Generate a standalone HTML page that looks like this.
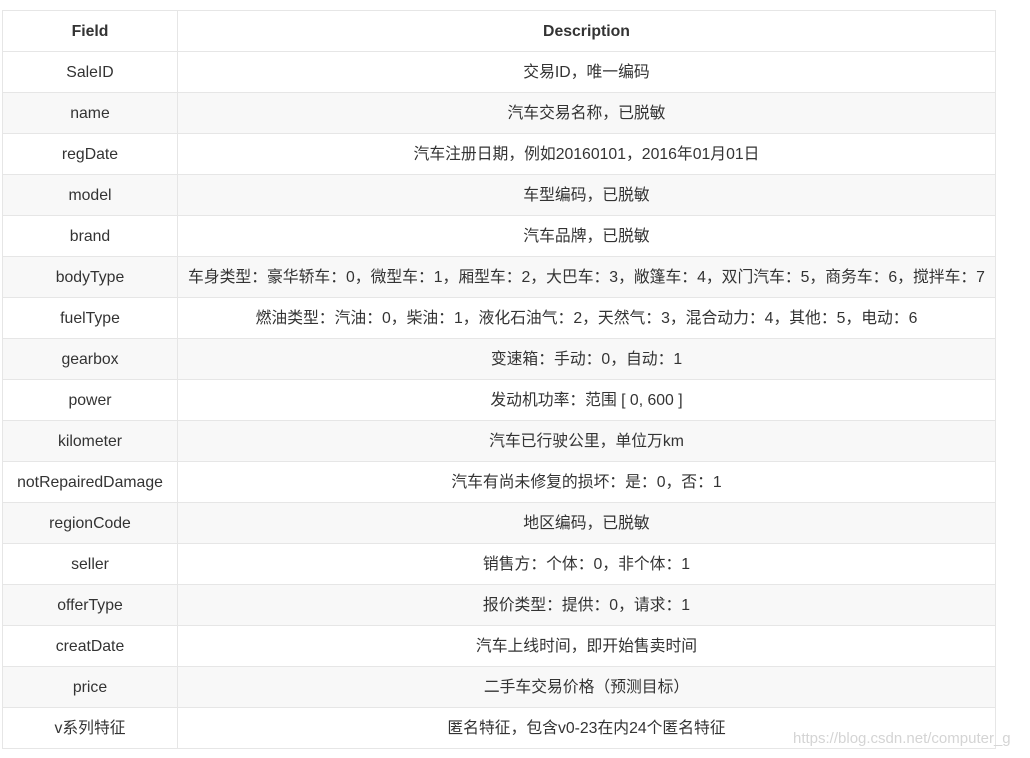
<!DOCTYPE html>
<html><head><meta charset="utf-8"><style>
html,body{margin:0;padding:0;background:#fff;width:1030px;height:758px;overflow:hidden}
body{font-family:"Liberation Sans","Noto Sans CJK SC",sans-serif;font-size:15.8px;color:#333}
table{position:absolute;left:2px;top:10px;border-collapse:collapse;table-layout:fixed}
td,th{border:1px solid #e6e6e6;height:38px;padding:2px 0 0 0;text-align:center;vertical-align:middle;white-space:nowrap;line-height:20px}
th{font-weight:bold;background:#fff}
tr:nth-child(odd) td{background:#f8f8f8}
.wm{position:absolute;left:793px;top:730px;font-size:15px;color:#d4d4d4;font-family:"Liberation Sans",sans-serif}
</style></head><body>
<table>
<colgroup><col style="width:175px"><col style="width:818px"></colgroup>
<tr><th>Field</th><th>Description</th></tr>
<tr><td>SaleID</td><td>交易ID，唯一编码</td></tr>
<tr><td>name</td><td>汽车交易名称，已脱敏</td></tr>
<tr><td>regDate</td><td>汽车注册日期，例如20160101，2016年01月01日</td></tr>
<tr><td>model</td><td>车型编码，已脱敏</td></tr>
<tr><td>brand</td><td>汽车品牌，已脱敏</td></tr>
<tr><td>bodyType</td><td>车身类型：豪华轿车：0，微型车：1，厢型车：2，大巴车：3，敞篷车：4，双门汽车：5，商务车：6，搅拌车：7</td></tr>
<tr><td>fuelType</td><td>燃油类型：汽油：0，柴油：1，液化石油气：2，天然气：3，混合动力：4，其他：5，电动：6</td></tr>
<tr><td>gearbox</td><td>变速箱：手动：0，自动：1</td></tr>
<tr><td>power</td><td>发动机功率：范围 [ 0, 600 ]</td></tr>
<tr><td>kilometer</td><td>汽车已行驶公里，单位万km</td></tr>
<tr><td>notRepairedDamage</td><td>汽车有尚未修复的损坏：是：0，否：1</td></tr>
<tr><td>regionCode</td><td>地区编码，已脱敏</td></tr>
<tr><td>seller</td><td>销售方：个体：0，非个体：1</td></tr>
<tr><td>offerType</td><td>报价类型：提供：0，请求：1</td></tr>
<tr><td>creatDate</td><td>汽车上线时间，即开始售卖时间</td></tr>
<tr><td>price</td><td>二手车交易价格（预测目标）</td></tr>
<tr><td>v系列特征</td><td>匿名特征，包含v0-23在内24个匿名特征</td></tr>
</table>
<div class="wm">https://blog.csdn.net/computer_g</div>
</body></html>
